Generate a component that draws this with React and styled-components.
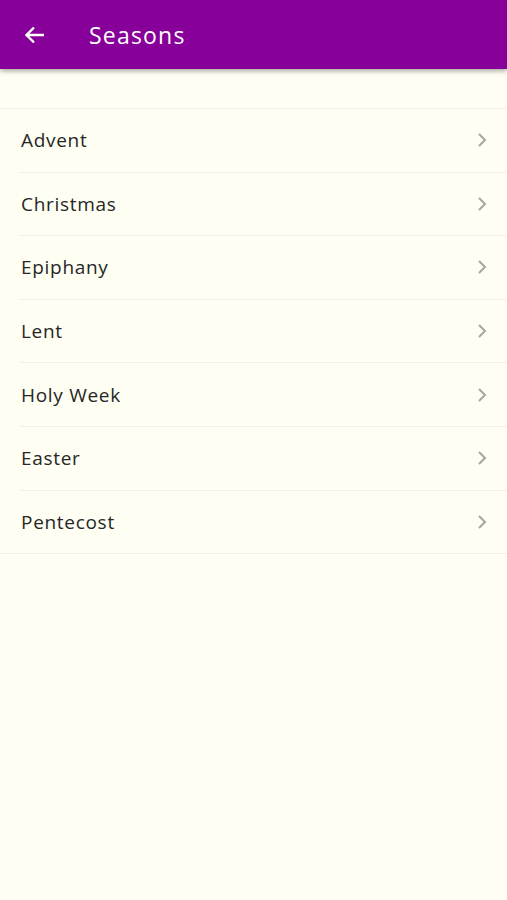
import styled, { createGlobalStyle } from 'styled-components'

const GlobalStyle = createGlobalStyle`
  html, body {
    margin: 0;
    padding: 0;
    background: #fefef2;
  }
  body {
    font-family: "Open Sans", "Liberation Sans", sans-serif;
  }
`

const Screen = styled.div`
  width: 507px;
  min-height: 900px;
  background: #fefef2;
`

const AppBar = styled.header`
  height: 69px;
  background: #88009a;
  display: flex;
  align-items: center;
  box-shadow: 0 2px 5px rgba(0, 0, 0, 0.35);
  position: relative;
  z-index: 1;
`

const BackButton = styled.button`
  width: 70px;
  height: 69px;
  border: 0;
  background: transparent;
  padding: 0 0 0 23px;
  display: flex;
  align-items: center;
  cursor: pointer;
`

const Title = styled.h1`
  margin: 0 0 0 19px;
  color: #fff;
  font-size: 23px;
  font-weight: 400;
  letter-spacing: 1.2px;
`

const List = styled.ul`
  list-style: none;
  margin: 39px 0 0;
  padding: 0;
  border-top: 1px solid #efefe4;
  border-bottom: 1px solid #efefe4;
`

const Row = styled.li`
  height: 62.6px;
  display: flex;
  align-items: center;
  justify-content: space-between;
  padding: 0 19px 0 21px;
  position: relative;
  & + &::before {
    content: '';
    position: absolute;
    top: -1px;
    left: 20px;
    right: 0;
    border-top: 1px solid #efefe4;
  }
  & + & {
    margin-top: 1px;
  }
`

const Label = styled.span`
  font-size: 19px;
  color: #262626;
  letter-spacing: 0.7px;
`

const Chevron = () => (
  <svg width="12" height="18" viewBox="0 0 12 18">
    <path d="M3 3 L9 9 L3 15" fill="none" stroke="#a6a6a0" strokeWidth="2" />
  </svg>
)

const seasons = ['Advent', 'Christmas', 'Epiphany', 'Lent', 'Holy Week', 'Easter', 'Pentecost']

export default function App() {
  return (
    <>
      <GlobalStyle />
      <Screen>
        <AppBar>
          <BackButton aria-label="Back">
            <svg width="24" height="24" viewBox="0 0 24 24">
              <path d="M21 12 H4 M11 4.5 L3.5 12 L11 19.5" fill="none" stroke="#fff" strokeWidth="2.4" />
            </svg>
          </BackButton>
          <Title>Seasons</Title>
        </AppBar>
        <List>
          {seasons.map(s => (
            <Row key={s}>
              <Label>{s}</Label>
              <Chevron />
            </Row>
          ))}
        </List>
      </Screen>
    </>
  )
}
